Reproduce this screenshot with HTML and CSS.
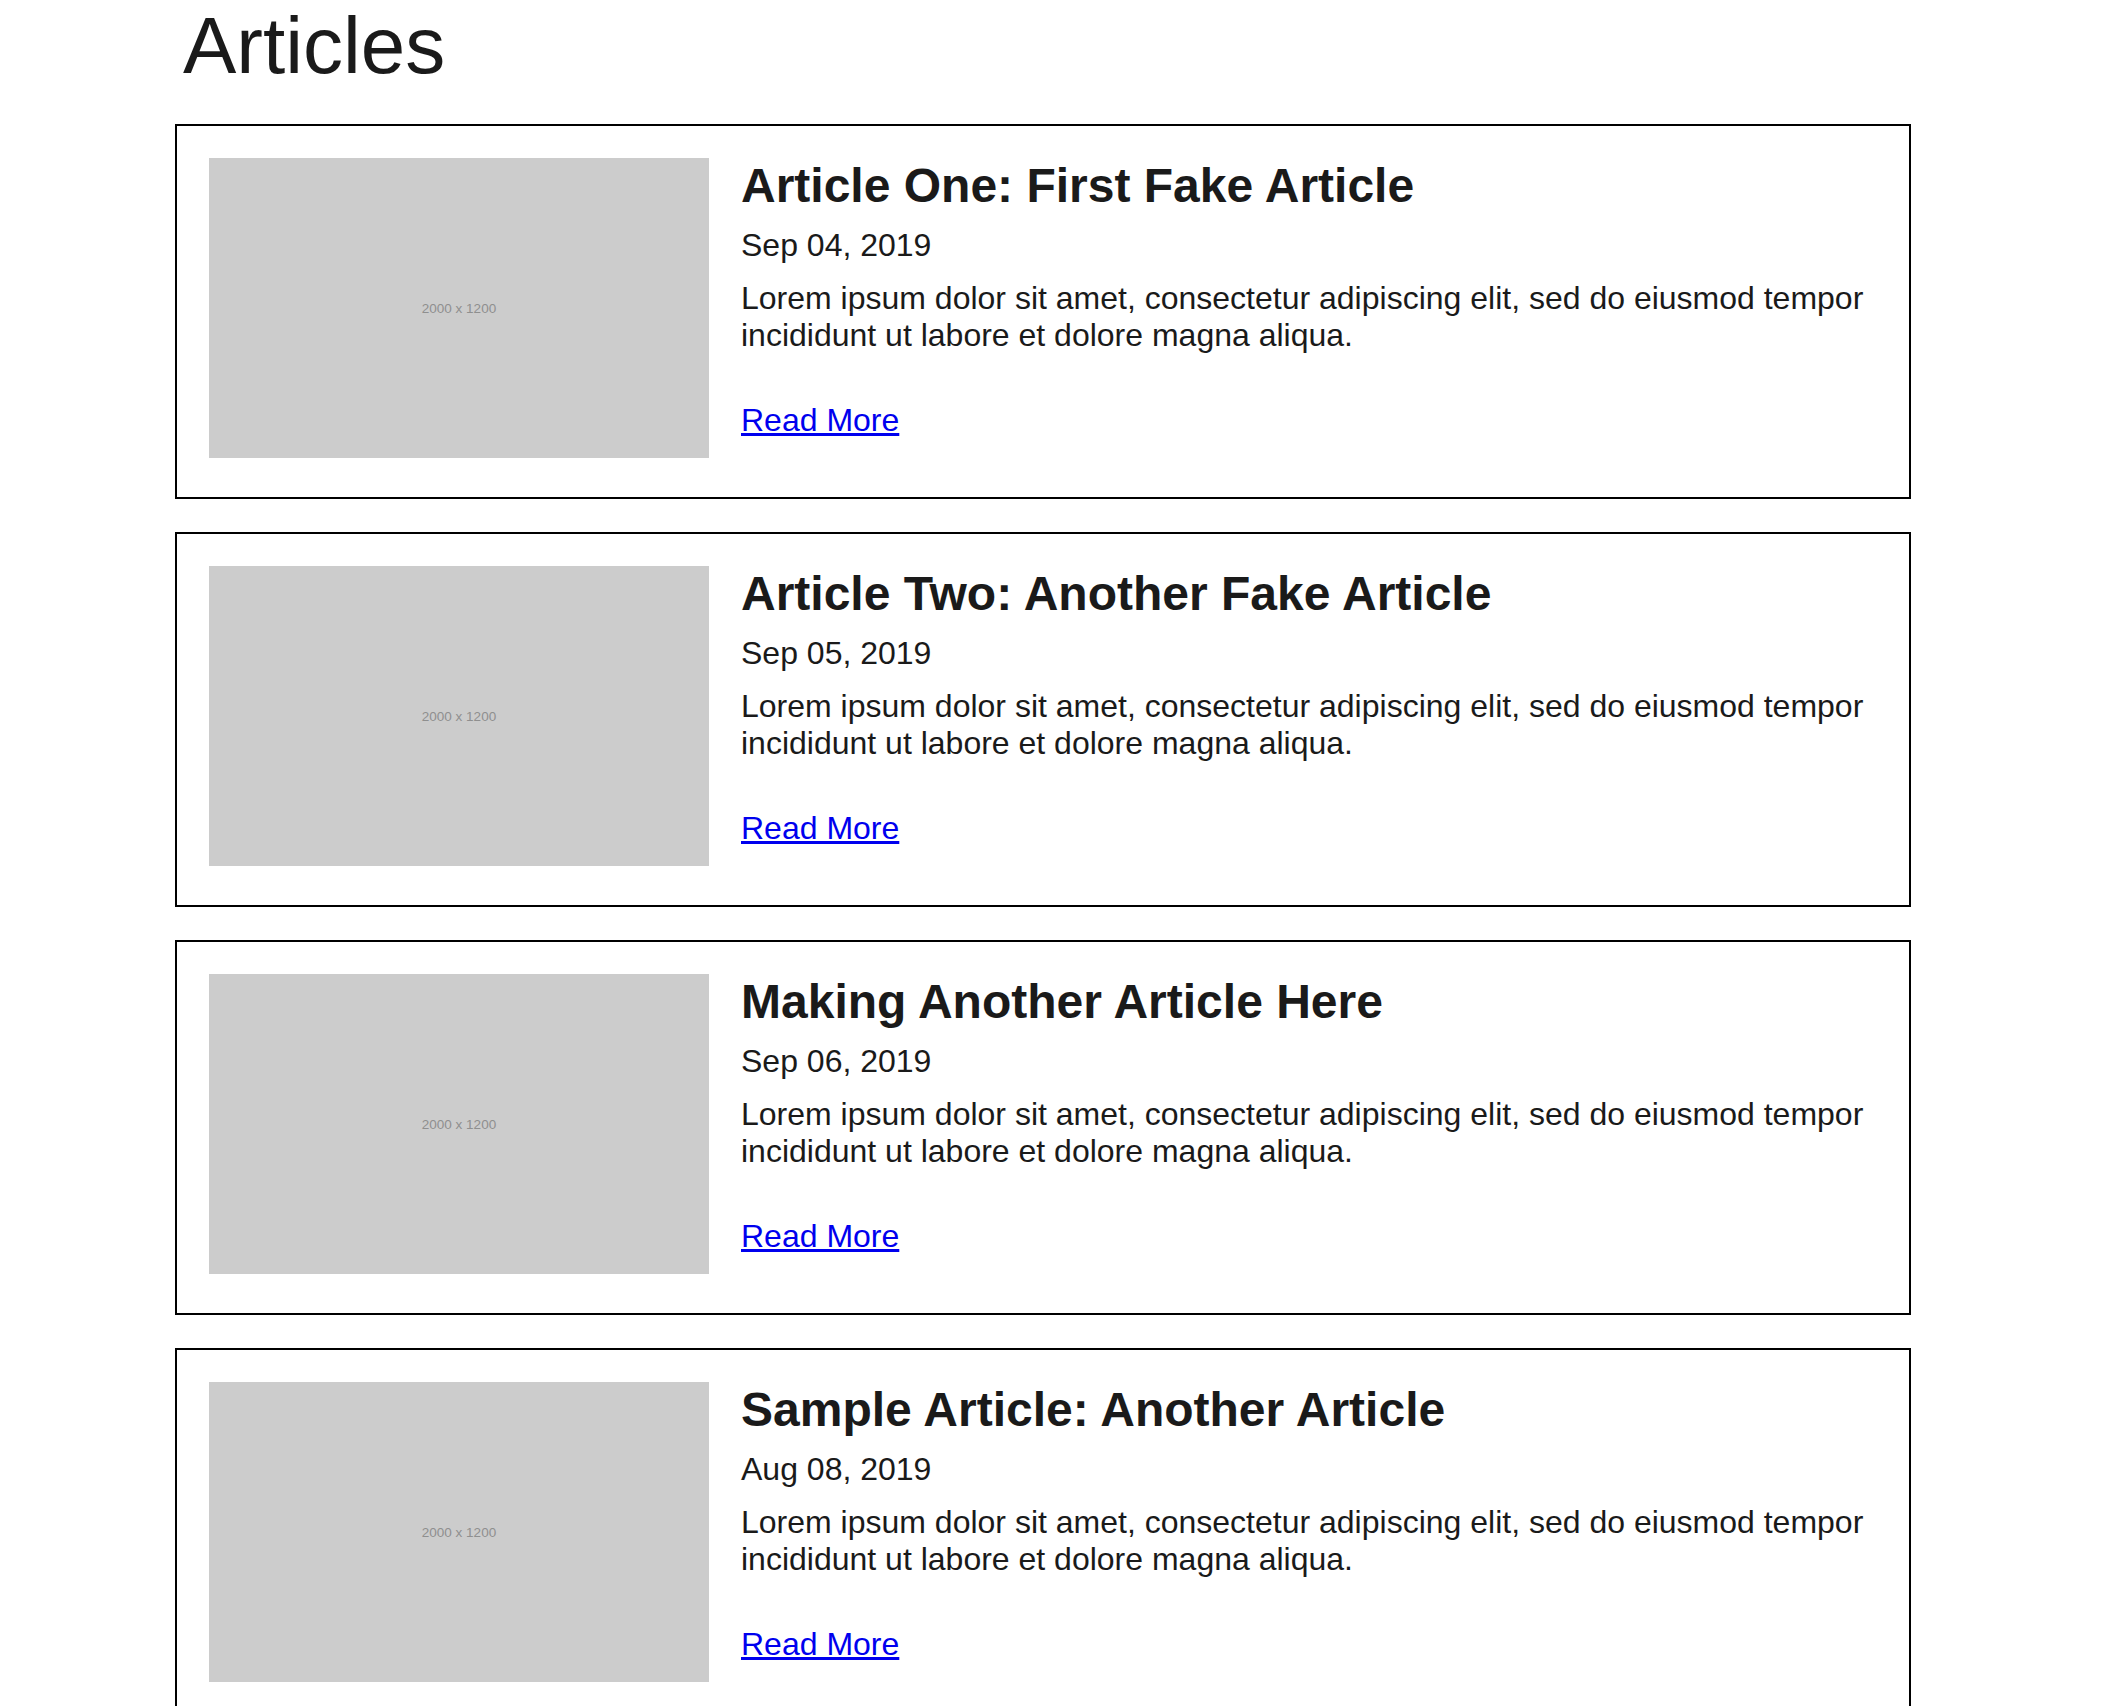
FILE: index.html
```html
<!DOCTYPE html>
<html lang="en">
<head>
    <meta charset="UTF-8">
    <meta name="viewport" content="width=device-width, initial-scale=1.0">
    <title>Articles</title>
    <link rel="stylesheet" href="styles.css">
</head>
<body>
    <div class="container">
        <h1>Articles</h1>

        <div class="article">
            <div class="thumb">2000 x 1200</div>
            <div class="article-body">
                <h2>Article One: First Fake Article</h2>
                <p class="date">Sep 04, 2019</p>
                <p class="summary">Lorem ipsum dolor sit amet, consectetur adipiscing elit, sed do eiusmod tempor incididunt ut labore et dolore magna aliqua.</p>
                <a href="#">Read More</a>
            </div>
        </div>

        <div class="article">
            <div class="thumb">2000 x 1200</div>
            <div class="article-body">
                <h2>Article Two: Another Fake Article</h2>
                <p class="date">Sep 05, 2019</p>
                <p class="summary">Lorem ipsum dolor sit amet, consectetur adipiscing elit, sed do eiusmod tempor incididunt ut labore et dolore magna aliqua.</p>
                <a href="#">Read More</a>
            </div>
        </div>

        <div class="article">
            <div class="thumb">2000 x 1200</div>
            <div class="article-body">
                <h2>Making Another Article Here</h2>
                <p class="date">Sep 06, 2019</p>
                <p class="summary">Lorem ipsum dolor sit amet, consectetur adipiscing elit, sed do eiusmod tempor incididunt ut labore et dolore magna aliqua.</p>
                <a href="#">Read More</a>
            </div>
        </div>

        <div class="article">
            <div class="thumb">2000 x 1200</div>
            <div class="article-body">
                <h2>Sample Article: Another Article</h2>
                <p class="date">Aug 08, 2019</p>
                <p class="summary">Lorem ipsum dolor sit amet, consectetur adipiscing elit, sed do eiusmod tempor incididunt ut labore et dolore magna aliqua.</p>
                <a href="#">Read More</a>
            </div>
        </div>
    </div>
</body>
</html>
```

FILE: styles.css
```css
body {
    font-family: 'Liberation Sans', Arial, sans-serif;
    color: #1a1a1a;
    margin: 0;
    padding: 0;
    background: #fff;
}
.container {
    width: 1736px;
    margin-left: 175px;
}
h1 {
    font-size: 80px;
    font-weight: normal;
    margin: 0 0 32px;
    padding-left: 8px;
}
.article {
    display: flex;
    gap: 32px;
    border: 2px solid #000;
    padding: 32px 32px 39px;
    margin-bottom: 33px;
}
.thumb {
    flex: none;
    width: 500px;
    height: 300px;
    background-color: #ccc;
    color: #8f8f8f;
    font-size: 13.5px;
    display: flex;
    align-items: center;
    justify-content: center;
}
.article-body {
    flex: 1;
    font-size: 32px;
}
.article-body h2 {
    font-size: 48px;
    margin: 0 0 14px;
}
.date {
    margin: 0 0 16px;
}
.summary {
    margin: 0 0 48px;
}
.article-body a {
    color: #0000ee;
}
```
